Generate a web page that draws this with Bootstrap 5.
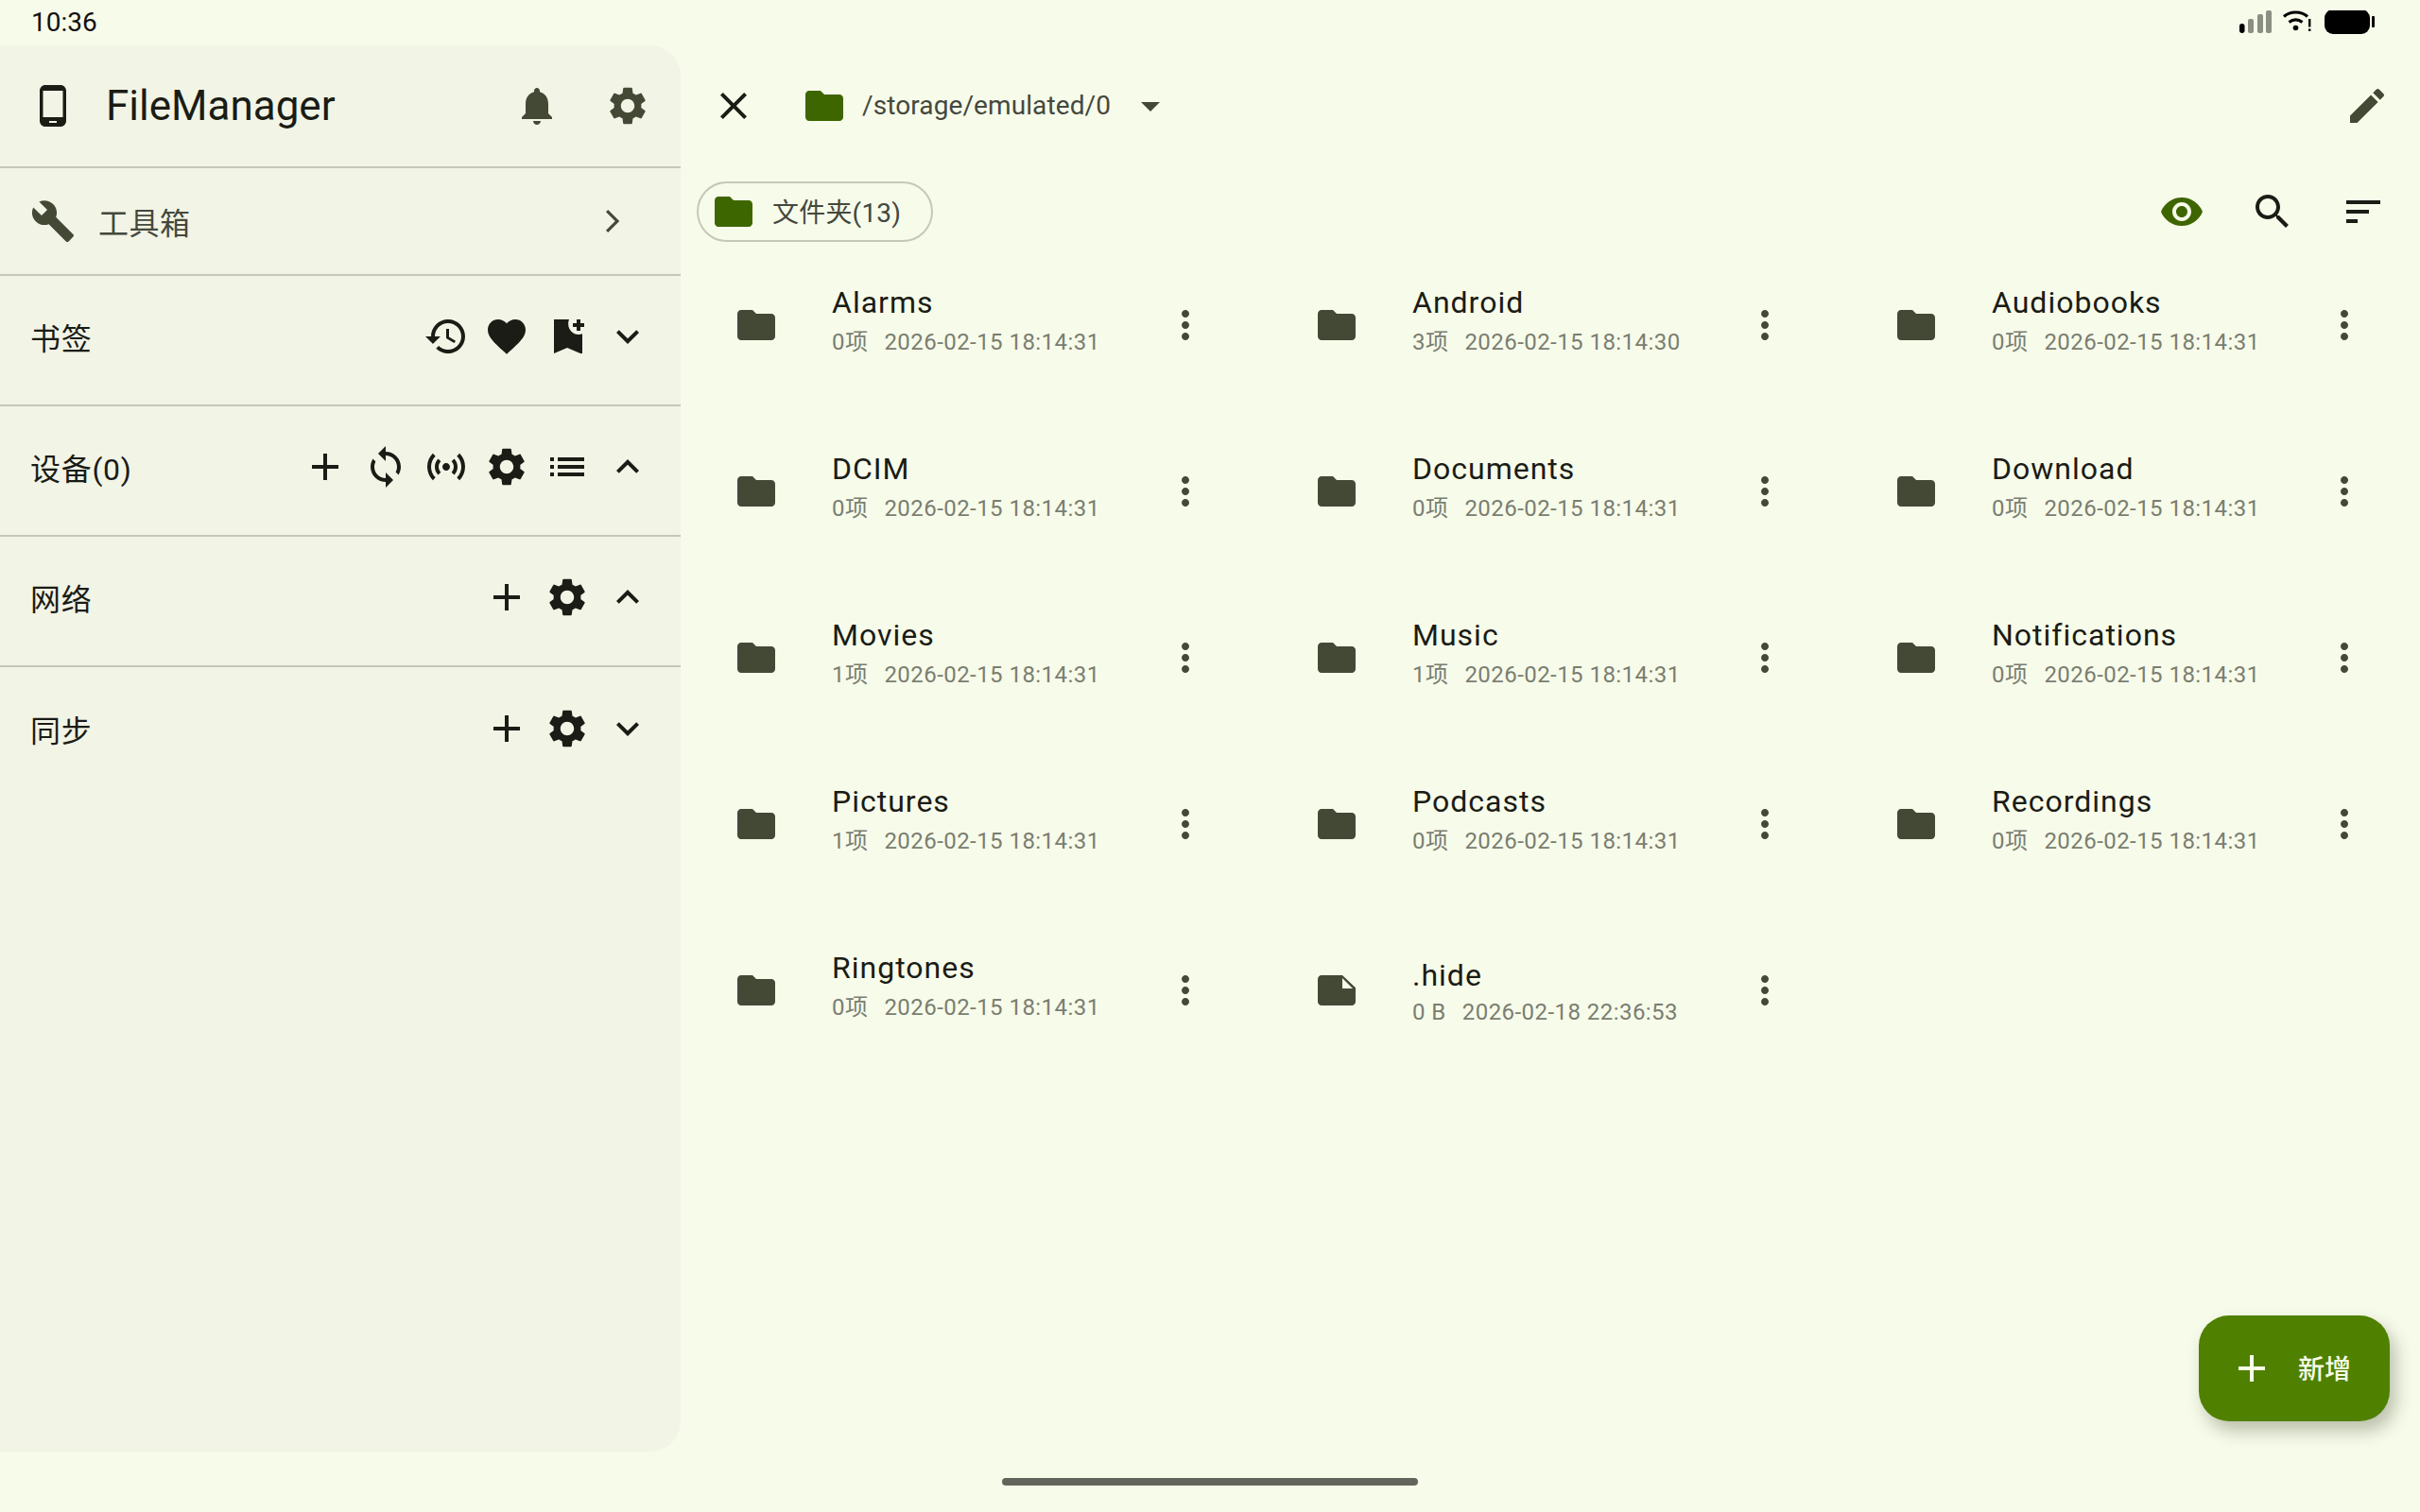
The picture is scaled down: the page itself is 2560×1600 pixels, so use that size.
<!DOCTYPE html>
<html lang="zh">
<head>
<meta charset="utf-8">
<title>FileManager</title>
<link href="https://cdn.jsdelivr.net/npm/bootstrap@5.3.0/dist/css/bootstrap.min.css" rel="stylesheet">
<style>
html,body{height:100%}
body{background:#f7fbea;color:#1a1c15;font-family:Roboto,"Noto Sans CJK SC",sans-serif;overflow:hidden}
.shell{width:2560px;height:1600px;position:relative}
.statusline{height:48px;padding:0 48px 0 33px;font-size:28px;line-height:1;color:#111}
.mainzone{height:1488px}
.sidepane{width:720px;background:#f2f4e6;border-radius:0 32px 32px 0;flex:none}
.side-head{height:130px;padding:0 32px;border-bottom:2px solid #c5c8b9}
.side-title{font-size:44px;line-height:1;margin-left:32px;color:#1a1c15}
.side-tool{height:114px;padding:0 48px 0 32px;border-bottom:2px solid #c5c8b9;color:#444936}
.side-tool-label{font-size:32px;margin-left:24px;line-height:1;margin-top:5px;letter-spacing:.5px;color:#44483d}
.side-sec{height:138px;padding:0 32px;border-bottom:2px solid #c5c8b9;font-size:32px;letter-spacing:.7px}
.side-sec.endsec{border-bottom:0}
.side-sec .ticons{gap:16px;margin-top:-8px}
.side-label{line-height:1;margin-top:-2px}
.gl{width:48px;height:48px;flex:none;display:block;fill:currentColor}
.c-mid{color:#444936}
.c-dark{color:#1a1c15}
.c-prim{color:#3e6600}
.contentpane{width:1840px;min-width:0}
.pathbar{height:128px;padding:0 32px}
.pathtext{font-size:28px;letter-spacing:.1px;line-height:1;color:#44483d;margin-left:16px;margin-right:18px}
.filterline{height:64px;margin-top:16px;padding:0 36px 0 17px}
.folderpill{height:64px;width:250px;border:2px solid #c5c8b9;border-radius:32px;padding-left:13px;color:#44483d;font-size:28px;line-height:1;letter-spacing:.2px}
.folderpill span{margin:4px 0 0 17px}
.actgroup{gap:48px}
.entrygrid{display:grid;grid-template-columns:614px 613px 613px}
.entry{height:176px}
.entry-icon{margin:0 56px}
.entry-body{min-width:0}
.entry-name{font-size:32px;letter-spacing:1px;line-height:36px;color:#1a1c15}
.entry-meta{font-size:24px;letter-spacing:.45px;line-height:48px;color:#7a7e71;white-space:nowrap}
.entry-meta span{margin-right:17px}
.entry-file .entry-name{line-height:46px}
.entry-file .entry-meta{line-height:32px}
.entry-more{margin-right:56px}
.newbtn{position:absolute;left:2326px;top:1392px;width:202px;height:112px;border-radius:32px;background:#508000;color:#f7ffe8;box-shadow:6px 10px 18px rgba(30,40,10,.28);font-size:28px;font-weight:500;line-height:1;padding-left:32px}
.newbtn:hover{background:#508000;color:#f7ffe8}
.newbtn span{margin:3px 0 0 25px}
.gesturezone{height:64px}
.gesturebar{width:440px;height:8px;border-radius:4px;background:#63655c}
</style>
</head>
<body>
<svg width="0" height="0" class="position-absolute">
<defs>
<symbol id="i-phone" viewBox="0 0 24 24"><path d="M16 1H8C6.34 1 5 2.34 5 4v16c0 1.66 1.34 3 3 3h8c1.66 0 3-1.34 3-3V4c0-1.66-1.34-3-3-3zm-2 20h-4v-1h4v1zm3.25-3H6.75V4h10.5v14z"/></symbol>
<symbol id="i-bell" viewBox="0 0 24 24"><path d="M12 22c1.1 0 2-.9 2-2h-4c0 1.1.89 2 2 2zm6-6v-5c0-3.07-1.64-5.64-4.5-6.32V4c0-.83-.67-1.5-1.5-1.5s-1.5.67-1.5 1.5v.68C7.63 5.36 6 7.92 6 11v5l-2 2v1h16v-1l-2-2z"/></symbol>
<symbol id="i-gear" viewBox="0 0 24 24"><path d="M19.14 12.94c.04-.3.06-.61.06-.94 0-.32-.02-.64-.07-.94l2.03-1.58c.18-.14.23-.41.12-.61l-1.92-3.32c-.12-.22-.37-.29-.59-.22l-2.39.96c-.5-.38-1.03-.7-1.62-.94l-.36-2.54c-.04-.24-.24-.41-.48-.41h-3.84c-.24 0-.43.17-.47.41l-.36 2.54c-.59.24-1.13.57-1.62.94l-2.39-.96c-.22-.08-.47 0-.59.22L2.74 8.87c-.12.21-.08.47.12.61l2.03 1.58c-.05.3-.09.63-.09.94s.02.64.07.94l-2.03 1.58c-.18.14-.23.41-.12.61l1.92 3.32c.12.22.37.29.59.22l2.39-.96c.5.38 1.03.7 1.62.94l.36 2.54c.05.24.24.41.48.41h3.84c.24 0 .44-.17.47-.41l.36-2.54c.59-.24 1.13-.56 1.62-.94l2.39.96c.22.08.47 0 .59-.22l1.92-3.32c.12-.22.07-.47-.12-.61l-2.01-1.58zM12 15.6c-1.98 0-3.6-1.62-3.6-3.6s1.62-3.6 3.6-3.6 3.6 1.62 3.6 3.6-1.62 3.6-3.6 3.6z"/></symbol>
<symbol id="i-wrench" viewBox="0 0 24 24"><path d="M22.7 19l-9.1-9.1c.9-2.3.4-5-1.5-6.9-2-2-5-2.4-7.4-1.3L9 6 6 9 1.6 4.7C.4 7.1.9 10.1 2.9 12.1c1.9 1.9 4.6 2.4 6.9 1.5l9.1 9.1c.4.4 1 .4 1.4 0l2.3-2.3c.5-.4.5-1.1.1-1.4z"/></symbol>
<symbol id="i-right" viewBox="0 0 24 24"><path d="M9.600 6L8.500 7.100 13.400 12l-4.900 4.900 1.100 1.100 6-6z"/></symbol>
<symbol id="i-history" viewBox="0 0 24 24"><path d="M13 3c-4.97 0-9 4.03-9 9H1l3.89 3.89.07.14L9 12H6c0-3.87 3.13-7 7-7s7 3.13 7 7-3.13 7-7 7c-1.93 0-3.68-.79-4.94-2.06l-1.42 1.42C8.27 19.99 10.51 21 13 21c4.97 0 9-4.03 9-9s-4.03-9-9-9zm-1 5v5l4.28 2.54.72-1.21-3.5-2.08V8H12z"/></symbol>
<symbol id="i-heart" viewBox="0 0 24 24"><path d="M12 21.35l-1.45-1.32C5.4 15.36 2 12.28 2 8.5 2 5.42 4.42 3 7.5 3c1.74 0 3.41.81 4.5 2.09C13.09 3.81 14.76 3 16.5 3 19.58 3 22 5.42 22 8.5c0 3.78-3.4 6.86-8.55 11.54L12 21.35z"/></symbol>
<symbol id="i-bookadd" viewBox="0 0 24 24"><path d="M21 7h-2v2h-2V7h-2V5h2V3h2v2h2v2zM19 21l-7-3-7 3V3h8c-.3.8-.4 1.500-.4 2.500 0 3 2.400 5.500 5.400 5.500.7 0 1.400-.1 2-.4V21z"/></symbol>
<symbol id="i-more" viewBox="0 0 24 24"><path d="M16.59 8.59L12 13.17 7.41 8.59 6 10l6 6 6-6z"/></symbol>
<symbol id="i-less" viewBox="0 0 24 24"><path d="M12 8l-6 6 1.41 1.41L12 10.83l4.59 4.58L18 14z"/></symbol>
<symbol id="i-add" viewBox="0 0 24 24"><path d="M19 13h-6v6h-2v-6H5v-2h6V5h2v6h6v2z"/></symbol>
<symbol id="i-sync" viewBox="0 0 24 24"><path d="M12 4V1L8 5l4 4V6c3.31 0 6 2.69 6 6 0 1.01-.25 1.97-.7 2.8l1.46 1.46C19.54 15.03 20 13.57 20 12c0-4.42-3.58-8-8-8zm0 14c-3.31 0-6-2.69-6-6 0-1.01.25-1.97.7-2.8L5.24 7.74C4.46 8.97 4 10.43 4 12c0 4.42 3.58 8 8 8v3l4-4-4-4v3z"/></symbol>
<symbol id="i-sensors" viewBox="0 0 24 24"><path d="M7.76 16.24C6.67 15.16 6 13.66 6 12s.67-3.16 1.76-4.24l1.42 1.42C8.45 9.9 8 10.9 8 12c0 1.1.45 2.1 1.17 2.83l-1.41 1.41zm8.48 0C17.33 15.16 18 13.66 18 12s-.67-3.16-1.76-4.24l-1.42 1.42C15.55 9.9 16 10.9 16 12c0 1.1-.45 2.1-1.17 2.83l1.41 1.41zM12 10c-1.1 0-2 .9-2 2s.9 2 2 2 2-.9 2-2-.9-2-2-2zm8 2c0 2.21-.9 4.21-2.35 5.65l1.42 1.42C20.88 17.26 22 14.76 22 12s-1.12-5.26-2.93-7.07l-1.42 1.42C19.1 7.79 20 9.79 20 12zM6.35 6.35L4.93 4.93C3.12 6.74 2 9.24 2 12s1.12 5.26 2.93 7.07l1.42-1.42C4.9 16.21 4 14.21 4 12s.9-4.21 2.35-5.65z"/></symbol>
<symbol id="i-list" viewBox="0 0 24 24"><path d="M3 13h2v-2H3v2zm0 4h2v-2H3v2zm0-8h2V7H3v2zm4 4h14v-2H7v2zm0 4h14v-2H7v2zM7 7v2h14V7H7z"/></symbol>
<symbol id="i-close" viewBox="0 0 24 24"><path d="M19 6.41L17.59 5 12 10.59 6.41 5 5 6.41 10.59 12 5 17.59 6.41 19 12 13.41 17.59 19 19 17.59 13.41 12z"/></symbol>
<symbol id="i-folder" viewBox="0 0 24 24"><path d="M10 4H4c-1.1 0-1.99.9-1.99 2L2 18c0 1.1.9 2 2 2h16c1.1 0 2-.9 2-2V8c0-1.1-.9-2-2-2h-8l-2-2z"/></symbol>
<symbol id="i-file" viewBox="0 0 24 24"><path fill-rule="evenodd" d="M4 4h11l7 6.6V18c0 1.1-.9 2-2 2H4c-1.1 0-2-.9-2-2V6c0-1.1.9-2 2-2zM15 5.500V11h5.500z"/></symbol>
<symbol id="i-vert" viewBox="0 0 24 24"><path d="M12 8c1.1 0 2-.9 2-2s-.9-2-2-2-2 .9-2 2 .9 2 2 2zm0 2c-1.1 0-2 .9-2 2s.9 2 2 2 2-.9 2-2-.9-2-2-2zm0 6c-1.1 0-2 .9-2 2s.9 2 2 2 2-.9 2-2-.9-2-2-2z"/></symbol>
<symbol id="i-edit" viewBox="0 0 24 24"><path d="M3 17.25V21h3.75L17.81 9.94l-3.75-3.75L3 17.25zM20.71 7.04c.39-.39.39-1.02 0-1.41l-2.34-2.34c-.39-.39-1.02-.39-1.41 0l-1.83 1.83 3.75 3.75 1.83-1.83z"/></symbol>
<symbol id="i-caret" viewBox="0 0 24 24"><path d="M7 10l5 5 5-5z"/></symbol>
<symbol id="i-eye" viewBox="0 0 24 24"><path d="M12 4.5C7 4.5 2.73 7.61 1 12c1.73 4.39 6 7.5 11 7.5s9.27-3.11 11-7.5c-1.73-4.39-6-7.5-11-7.5zM12 17c-2.76 0-5-2.24-5-5s2.24-5 5-5 5 2.24 5 5-2.24 5-5 5zm0-8c-1.66 0-3 1.34-3 3s1.34 3 3 3 3-1.34 3-3-1.34-3-3-3z"/></symbol>
<symbol id="i-search" viewBox="0 0 24 24"><path d="M15.5 14h-.79l-.28-.27C15.41 12.59 16 11.11 16 9.5 16 5.91 13.09 3 9.5 3S3 5.91 3 9.5 5.91 16 9.5 16c1.61 0 3.09-.59 4.23-1.57l.27.28v.79l5 4.99L20.49 19l-4.99-5zm-6 0C7.01 14 5 11.99 5 9.5S7.01 5 9.5 5 14 7.01 14 9.5 11.99 14 9.5 14z"/></symbol>
<symbol id="i-sort" viewBox="0 0 24 24"><path d="M3 18h6v-2H3v2zM3 6v2h18V6H3zm0 7h12v-2H3v2z"/></symbol>
</defs>
</svg>
<div class="shell d-flex flex-column">
  <div class="statusline d-flex align-items-center justify-content-between">
    <span>10:36</span>
    <svg width="143" height="26" viewBox="0 0 143 26" aria-hidden="true" class="d-block">
      <rect x="0" y="14" width="5.500" height="10" rx="2.700" fill="#000"/>
      <rect x="9" y="9" width="6" height="15" rx="2" fill="#8b8e82"/>
      <rect x="19" y="4" width="6" height="20" rx="2" fill="#8b8e82"/>
      <rect x="28" y="0" width="6" height="24" rx="2" fill="#8b8e82"/>
      <path d="M47 6.500C54 .500 65 .500 72 6.500M52.500 12.500C57 9 62 9 66.500 12.500" fill="none" stroke="#000" stroke-width="3.200"/>
      <circle cx="59.500" cy="18.500" r="2.800" fill="#000"/>
      <rect x="73" y="9" width="2.400" height="8.500" fill="#000"/>
      <rect x="73" y="19.500" width="2.400" height="2.500" fill="#000"/>
      <rect x="90" y="-1" width="48" height="26" rx="9" fill="#000"/>
      <rect x="140" y="6" width="3" height="12" rx="1" fill="#000"/>
    </svg>
  </div>
  <div class="mainzone d-flex">
    <aside class="sidepane d-flex flex-column">
      <div class="side-head d-flex align-items-center">
        <svg class="gl c-dark"><use href="#i-phone"/></svg>
        <div class="side-title flex-grow-1">FileManager</div>
        <div class="d-flex c-mid actgroup">
          <svg class="gl"><use href="#i-bell"/></svg>
          <svg class="gl"><use href="#i-gear"/></svg>
        </div>
      </div>
      <div class="side-tool d-flex align-items-center">
        <svg class="gl"><use href="#i-wrench"/></svg>
        <div class="side-tool-label flex-grow-1">工具箱</div>
        <svg class="gl"><use href="#i-right"/></svg>
      </div>
      <div class="side-sec d-flex align-items-center justify-content-between">
        <div class="side-label">书签</div>
        <div class="ticons d-flex c-dark">
          <svg class="gl"><use href="#i-history"/></svg>
          <svg class="gl"><use href="#i-heart"/></svg>
          <svg class="gl"><use href="#i-bookadd"/></svg>
          <svg class="gl"><use href="#i-more"/></svg>
        </div>
      </div>
      <div class="side-sec d-flex align-items-center justify-content-between">
        <div class="side-label">设备(0)</div>
        <div class="ticons d-flex c-dark">
          <svg class="gl"><use href="#i-add"/></svg>
          <svg class="gl"><use href="#i-sync"/></svg>
          <svg class="gl"><use href="#i-sensors"/></svg>
          <svg class="gl"><use href="#i-gear"/></svg>
          <svg class="gl"><use href="#i-list"/></svg>
          <svg class="gl"><use href="#i-less"/></svg>
        </div>
      </div>
      <div class="side-sec d-flex align-items-center justify-content-between">
        <div class="side-label">网络</div>
        <div class="ticons d-flex c-dark">
          <svg class="gl"><use href="#i-add"/></svg>
          <svg class="gl"><use href="#i-gear"/></svg>
          <svg class="gl"><use href="#i-less"/></svg>
        </div>
      </div>
      <div class="side-sec endsec d-flex align-items-center justify-content-between">
        <div class="side-label">同步</div>
        <div class="ticons d-flex c-dark">
          <svg class="gl"><use href="#i-add"/></svg>
          <svg class="gl"><use href="#i-gear"/></svg>
          <svg class="gl"><use href="#i-more"/></svg>
        </div>
      </div>
    </aside>
    <main class="contentpane">
      <div class="pathbar d-flex align-items-center">
        <svg class="gl c-dark me-5"><use href="#i-close"/></svg>
        <svg class="gl c-prim"><use href="#i-folder"/></svg>
        <div class="pathtext">/storage/emulated/0</div>
        <svg class="gl c-mid"><use href="#i-caret"/></svg>
        <svg class="gl c-mid ms-auto"><use href="#i-edit"/></svg>
      </div>
      <div class="filterline d-flex align-items-center justify-content-between">
        <div class="folderpill d-flex align-items-center">
          <svg class="gl c-prim"><use href="#i-folder"/></svg>
          <span>文件夹(13)</span>
        </div>
        <div class="d-flex actgroup">
          <svg class="gl c-prim"><use href="#i-eye"/></svg>
          <svg class="gl c-dark"><use href="#i-search"/></svg>
          <svg class="gl c-dark"><use href="#i-sort"/></svg>
        </div>
      </div>
      <div class="entrygrid">
        <div class="entry d-flex align-items-center"><svg class="gl c-mid entry-icon"><use href="#i-folder"/></svg><div class="entry-body flex-grow-1"><div class="entry-name">Alarms</div><div class="entry-meta"><span>0项</span>2026-02-15 18:14:31</div></div><svg class="gl c-mid entry-more"><use href="#i-vert"/></svg></div>
        <div class="entry d-flex align-items-center"><svg class="gl c-mid entry-icon"><use href="#i-folder"/></svg><div class="entry-body flex-grow-1"><div class="entry-name">Android</div><div class="entry-meta"><span>3项</span>2026-02-15 18:14:30</div></div><svg class="gl c-mid entry-more"><use href="#i-vert"/></svg></div>
        <div class="entry d-flex align-items-center"><svg class="gl c-mid entry-icon"><use href="#i-folder"/></svg><div class="entry-body flex-grow-1"><div class="entry-name">Audiobooks</div><div class="entry-meta"><span>0项</span>2026-02-15 18:14:31</div></div><svg class="gl c-mid entry-more"><use href="#i-vert"/></svg></div>
        <div class="entry d-flex align-items-center"><svg class="gl c-mid entry-icon"><use href="#i-folder"/></svg><div class="entry-body flex-grow-1"><div class="entry-name">DCIM</div><div class="entry-meta"><span>0项</span>2026-02-15 18:14:31</div></div><svg class="gl c-mid entry-more"><use href="#i-vert"/></svg></div>
        <div class="entry d-flex align-items-center"><svg class="gl c-mid entry-icon"><use href="#i-folder"/></svg><div class="entry-body flex-grow-1"><div class="entry-name">Documents</div><div class="entry-meta"><span>0项</span>2026-02-15 18:14:31</div></div><svg class="gl c-mid entry-more"><use href="#i-vert"/></svg></div>
        <div class="entry d-flex align-items-center"><svg class="gl c-mid entry-icon"><use href="#i-folder"/></svg><div class="entry-body flex-grow-1"><div class="entry-name">Download</div><div class="entry-meta"><span>0项</span>2026-02-15 18:14:31</div></div><svg class="gl c-mid entry-more"><use href="#i-vert"/></svg></div>
        <div class="entry d-flex align-items-center"><svg class="gl c-mid entry-icon"><use href="#i-folder"/></svg><div class="entry-body flex-grow-1"><div class="entry-name">Movies</div><div class="entry-meta"><span>1项</span>2026-02-15 18:14:31</div></div><svg class="gl c-mid entry-more"><use href="#i-vert"/></svg></div>
        <div class="entry d-flex align-items-center"><svg class="gl c-mid entry-icon"><use href="#i-folder"/></svg><div class="entry-body flex-grow-1"><div class="entry-name">Music</div><div class="entry-meta"><span>1项</span>2026-02-15 18:14:31</div></div><svg class="gl c-mid entry-more"><use href="#i-vert"/></svg></div>
        <div class="entry d-flex align-items-center"><svg class="gl c-mid entry-icon"><use href="#i-folder"/></svg><div class="entry-body flex-grow-1"><div class="entry-name">Notifications</div><div class="entry-meta"><span>0项</span>2026-02-15 18:14:31</div></div><svg class="gl c-mid entry-more"><use href="#i-vert"/></svg></div>
        <div class="entry d-flex align-items-center"><svg class="gl c-mid entry-icon"><use href="#i-folder"/></svg><div class="entry-body flex-grow-1"><div class="entry-name">Pictures</div><div class="entry-meta"><span>1项</span>2026-02-15 18:14:31</div></div><svg class="gl c-mid entry-more"><use href="#i-vert"/></svg></div>
        <div class="entry d-flex align-items-center"><svg class="gl c-mid entry-icon"><use href="#i-folder"/></svg><div class="entry-body flex-grow-1"><div class="entry-name">Podcasts</div><div class="entry-meta"><span>0项</span>2026-02-15 18:14:31</div></div><svg class="gl c-mid entry-more"><use href="#i-vert"/></svg></div>
        <div class="entry d-flex align-items-center"><svg class="gl c-mid entry-icon"><use href="#i-folder"/></svg><div class="entry-body flex-grow-1"><div class="entry-name">Recordings</div><div class="entry-meta"><span>0项</span>2026-02-15 18:14:31</div></div><svg class="gl c-mid entry-more"><use href="#i-vert"/></svg></div>
        <div class="entry d-flex align-items-center"><svg class="gl c-mid entry-icon"><use href="#i-folder"/></svg><div class="entry-body flex-grow-1"><div class="entry-name">Ringtones</div><div class="entry-meta"><span>0项</span>2026-02-15 18:14:31</div></div><svg class="gl c-mid entry-more"><use href="#i-vert"/></svg></div>
        <div class="entry entry-file d-flex align-items-center"><svg class="gl c-mid entry-icon"><use href="#i-file"/></svg><div class="entry-body flex-grow-1"><div class="entry-name">.hide</div><div class="entry-meta"><span>0 B</span>2026-02-18 22:36:53</div></div><svg class="gl c-mid entry-more"><use href="#i-vert"/></svg></div>
      </div>
    </main>
  </div>
  <div class="gesturezone d-flex align-items-center justify-content-center"><div class="gesturebar"></div></div>
  <button type="button" class="newbtn btn border-0 d-flex align-items-center">
    <svg class="gl"><use href="#i-add"/></svg>
    <span>新增</span>
  </button>
</div>
</body>
</html>
